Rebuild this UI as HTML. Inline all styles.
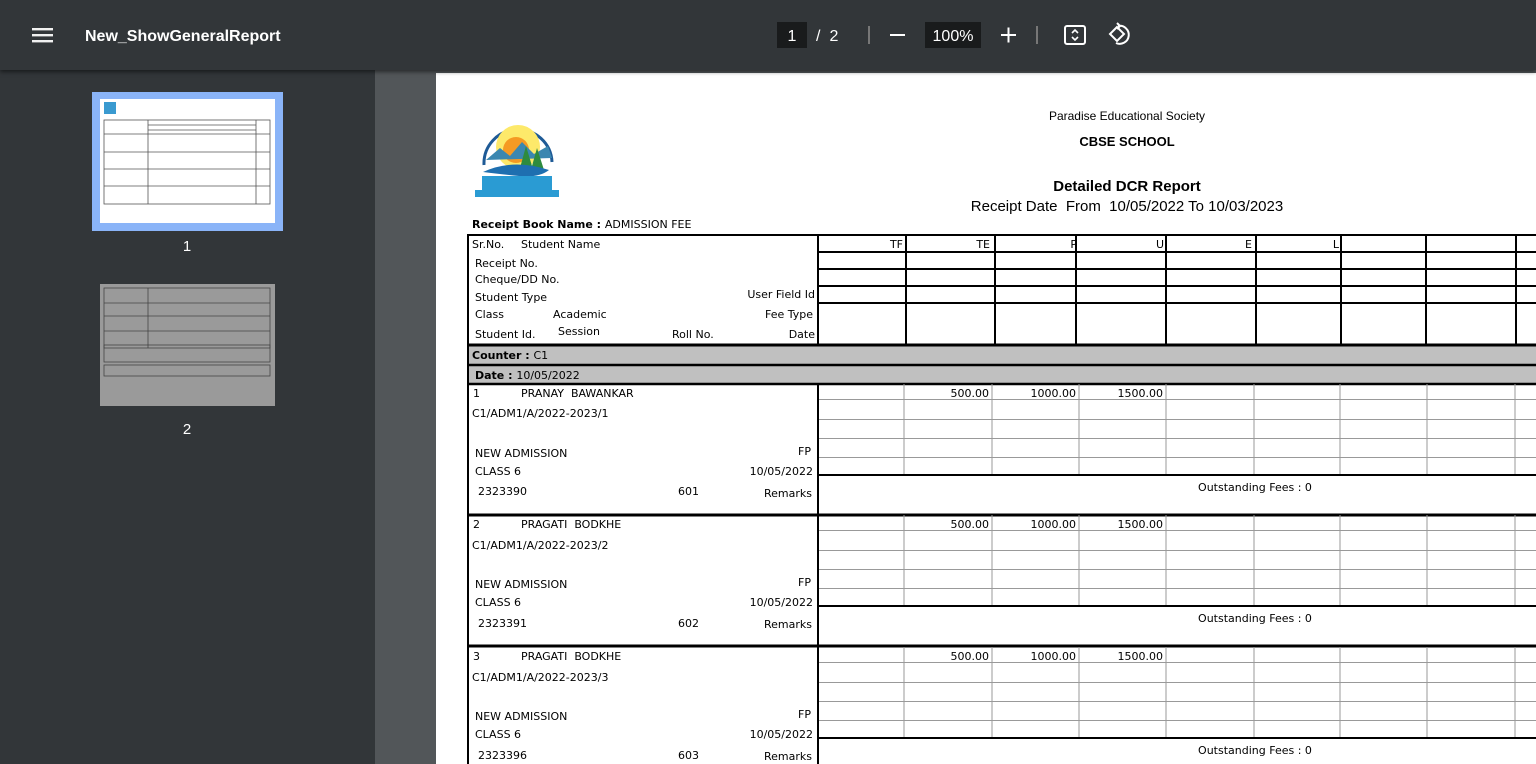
<!DOCTYPE html>
<html><head><meta charset="utf-8"><style>
html,body{margin:0;padding:0;width:1536px;height:764px;overflow:hidden;background:#525659;font-family:"Liberation Sans",sans-serif}
#tb{position:absolute;left:0;top:0;width:1536px;height:70px;background:#323639;box-shadow:0 2px 4px rgba(0,0,0,.5);z-index:2}
#side{position:absolute;left:0;top:70px;width:375px;height:694px;background:#323639}
svg{position:absolute;left:0;top:0}
text{white-space:pre}
</style></head><body>
<div id="side"></div>
<div id="tb"></div>
<svg width="1536" height="764" style="z-index:3">
 <g fill="#f1f1f1"><rect x="32" y="28" width="21" height="2.4"/><rect x="32" y="34" width="21" height="2.4"/><rect x="32" y="40" width="21" height="2.4"/></g>
 <text x="85" y="41" fill="#fff" font-size="16" font-weight="bold">New_ShowGeneralReport</text>
 <rect x="777" y="22" width="30" height="26" fill="#191b1c"/>
 <text x="792" y="41" fill="#fff" font-size="16" text-anchor="middle">1</text>
 <text x="816" y="41" fill="#fff" font-size="16">/</text>
 <text x="834" y="41" fill="#fff" font-size="16" text-anchor="middle">2</text>
 <rect x="868" y="26" width="2" height="18" fill="#777"/>
 <rect x="890" y="34" width="15" height="2" fill="#fff"/>
 <rect x="925" y="22" width="56" height="26" fill="#191b1c"/>
 <text x="953" y="41" fill="#fff" font-size="16" text-anchor="middle">100%</text>
 <rect x="1001" y="34" width="15" height="2" fill="#fff"/><rect x="1007.5" y="27.5" width="2" height="15" fill="#fff"/>
 <rect x="1036" y="26" width="2" height="18" fill="#777"/>
 <rect x="1065" y="26" width="20" height="18" rx="2" fill="none" stroke="#fff" stroke-width="2"/>
 <path d="M1072 33 l3 -3 l3 3 M1072 37 l3 3 l3 -3" fill="none" stroke="#fff" stroke-width="1.6"/>
 <path d="M1117 27 l-7 7 l7 7 l7 -7z" fill="none" stroke="#fff" stroke-width="2"/>
 <path d="M1118 26 a9 9 0 1 1 -2 17" fill="none" stroke="#fff" stroke-width="2"/>
 <path d="M1117 23 l3 3 l-3 3" fill="none" stroke="#fff" stroke-width="2"/>
 <rect x="92" y="92" width="191" height="139" fill="#8ab4f8"/>
 <rect x="100" y="99" width="175" height="124" fill="#fff"/>
 <g stroke="#555" stroke-width="0.8" fill="none">
  <rect x="104" y="120" width="166" height="84"/><line x1="148" y1="120" x2="148" y2="204"/>
  <line x1="104" y1="134" x2="270" y2="134"/><line x1="104" y1="152" x2="270" y2="152"/><line x1="104" y1="169" x2="270" y2="169"/><line x1="104" y1="186" x2="270" y2="186"/>
  <line x1="148" y1="125" x2="256" y2="125"/><line x1="148" y1="130" x2="256" y2="130"/><line x1="256" y1="120" x2="256" y2="204"/>
 </g>
 <rect x="104" y="102" width="12" height="12" fill="#3a9ad0"/>
 <text x="187" y="251" fill="#fff" font-size="15" text-anchor="middle">1</text>
 <rect x="100" y="284" width="175" height="122" fill="#9a9a9a"/>
 <g stroke="#444" stroke-width="0.8" fill="none">
  <rect x="104" y="288" width="166" height="60"/><line x1="148" y1="288" x2="148" y2="348"/>
  <line x1="104" y1="303" x2="270" y2="303"/><line x1="104" y1="316" x2="270" y2="316"/><line x1="104" y1="331" x2="270" y2="331"/>
  <rect x="104" y="345" width="166" height="17"/><rect x="104" y="365" width="166" height="11"/>
 </g>
 <text x="187" y="434" fill="#fff" font-size="15" text-anchor="middle">2</text>
</svg>
<svg width="1536" height="764" style="z-index:1">
 <rect x="436" y="73" width="1100" height="691" fill="#fff"/>
 <path d="M484 165 a34 34 0 1 1 68 -3" fill="none" stroke="#1e5a96" stroke-width="3"/>
 <circle cx="518" cy="147" r="22" fill="#fde96a"/><circle cx="516" cy="150" r="13" fill="#f59a23"/>
 <path d="M486 160 l14 -12 l10 8 l12 -14 l12 12 l14 -8 l4 12 z" fill="#3b87b0"/>
 <path d="M520 168 l6 -22 l6 20 l5 -18 l7 22z" fill="#2e8b3e"/>
 <path d="M483 172 q30 -14 66 -2 q-10 8 -30 6 q-20 -2 -36 -4z" fill="#1e6fb0"/>
 <rect x="482" y="176" width="70" height="14" fill="#2a9bd3"/><rect x="475" y="190" width="84" height="7" fill="#2a9bd3"/>
 <g font-family="'Liberation Sans',sans-serif" fill="#000" text-anchor="middle">
  <text x="1127" y="120" font-size="12">Paradise Educational Society</text>
  <text x="1127" y="146" font-size="13" font-weight="bold">CBSE SCHOOL</text>
  <text x="1127" y="191" font-size="15" font-weight="bold">Detailed DCR Report</text>
  <text x="1127" y="211" font-size="15">Receipt Date  From  10/05/2022 To 10/03/2023</text>
 </g>
 <rect x="469" y="346" width="1067" height="18" fill="#c0c0c0"/>
 <rect x="469" y="366" width="1067" height="18" fill="#c0c0c0"/>
 <g font-family="'DejaVu Sans',sans-serif" font-size="11" fill="#000">
  <text x="472" y="228"><tspan font-weight="bold">Receipt Book Name : </tspan>ADMISSION FEE</text>
  <text x="472" y="248">Sr.No.</text><text x="521" y="248">Student Name</text>
  <text x="475" y="267">Receipt No.</text><text x="475" y="283">Cheque/DD No.</text>
  <text x="475" y="301">Student Type</text><text x="815" y="298" text-anchor="end">User Field Id</text>
  <text x="475" y="318">Class</text><text x="553" y="318">Academic</text><text x="813" y="318" text-anchor="end">Fee Type</text>
  <text x="475" y="338">Student Id.</text><text x="558" y="335">Session</text><text x="672" y="338">Roll No.</text><text x="815" y="338" text-anchor="end">Date</text>
  <g text-anchor="end"><text x="903" y="248">TF</text><text x="990" y="248">TE</text><text x="1077" y="248">P</text><text x="1164" y="248">U</text><text x="1252" y="248">E</text><text x="1339" y="248">L</text></g>
  <text x="472" y="359"><tspan font-weight="bold">Counter : </tspan>C1</text>
  <text x="475" y="379"><tspan font-weight="bold">Date : </tspan>10/05/2022</text>
 </g>
 <g stroke="#000" fill="none">
  <line x1="468" y1="235" x2="1536" y2="235" stroke-width="2"/>
  <line x1="468" y1="234" x2="468" y2="764" stroke-width="2"/>
  <g stroke-width="2">
   <line x1="818" y1="235" x2="818" y2="344"/><line x1="906" y1="235" x2="906" y2="344"/><line x1="995" y1="235" x2="995" y2="344"/><line x1="1076" y1="235" x2="1076" y2="344"/><line x1="1166" y1="235" x2="1166" y2="344"/><line x1="1256" y1="235" x2="1256" y2="344"/><line x1="1341" y1="235" x2="1341" y2="344"/><line x1="1426" y1="235" x2="1426" y2="344"/><line x1="1516" y1="235" x2="1516" y2="344"/>
   <line x1="818" y1="252" x2="1536" y2="252"/><line x1="818" y1="269" x2="1536" y2="269"/><line x1="818" y1="286" x2="1536" y2="286"/><line x1="818" y1="303" x2="1536" y2="303"/>
  </g>
  <line x1="468" y1="345" x2="1536" y2="345" stroke-width="3"/>
  <line x1="468" y1="365" x2="1536" y2="365" stroke-width="2.5"/>
  <line x1="468" y1="384" x2="1536" y2="384" stroke-width="2.5"/>
 </g>
 <defs>
  <g id="rec">
   <g stroke="#999" stroke-width="1">
    <line x1="904" y1="0" x2="904" y2="91"/><line x1="992" y1="0" x2="992" y2="91"/><line x1="1079" y1="0" x2="1079" y2="91"/><line x1="1166" y1="0" x2="1166" y2="91"/><line x1="1254" y1="0" x2="1254" y2="91"/><line x1="1340" y1="0" x2="1340" y2="91"/><line x1="1427" y1="0" x2="1427" y2="91"/><line x1="1515" y1="0" x2="1515" y2="91"/>
    <line x1="818" y1="15.5" x2="1536" y2="15.5"/><line x1="818" y1="35.5" x2="1536" y2="35.5"/><line x1="818" y1="54.5" x2="1536" y2="54.5"/><line x1="818" y1="73.5" x2="1536" y2="73.5"/>
   </g>
   <line x1="818" y1="0" x2="818" y2="131" stroke="#000" stroke-width="2"/>
   <line x1="818" y1="91" x2="1536" y2="91" stroke="#000" stroke-width="2"/>
   <line x1="468" y1="131" x2="1536" y2="131" stroke="#000" stroke-width="3"/>
   <g font-family="'DejaVu Sans',sans-serif" font-size="11" fill="#000">
    <g text-anchor="end"><text x="989" y="13">500.00</text><text x="1076" y="13">1000.00</text><text x="1163" y="13">1500.00</text></g>
    <text x="1255" y="107" text-anchor="middle">Outstanding Fees : 0</text>
    <text x="475" y="73">NEW ADMISSION</text><text x="811" y="71" text-anchor="end">FP</text>
    <text x="475" y="91">CLASS 6</text><text x="813" y="91" text-anchor="end">10/05/2022</text>
    <text x="812" y="113" text-anchor="end">Remarks</text>
   </g>
  </g>
 </defs>
 <g font-family="'DejaVu Sans',sans-serif" font-size="11" fill="#000">
  <g transform="translate(0,384)"><use href="#rec"/>
   <text x="473" y="13">1</text><text x="521" y="13">PRANAY  BAWANKAR</text><text x="472" y="33">C1/ADM1/A/2022-2023/1</text>
   <text x="478" y="111">2323390</text><text x="678" y="111">601</text></g>
  <g transform="translate(0,515)"><use href="#rec"/>
   <text x="473" y="13">2</text><text x="521" y="13">PRAGATI  BODKHE</text><text x="472" y="34">C1/ADM1/A/2022-2023/2</text>
   <text x="478" y="112">2323391</text><text x="678" y="112">602</text></g>
  <g transform="translate(0,647)"><use href="#rec"/>
   <text x="473" y="13">3</text><text x="521" y="13">PRAGATI  BODKHE</text><text x="472" y="34">C1/ADM1/A/2022-2023/3</text>
   <text x="478" y="112">2323396</text><text x="678" y="112">603</text></g>
 </g>
</svg>
</body></html>
